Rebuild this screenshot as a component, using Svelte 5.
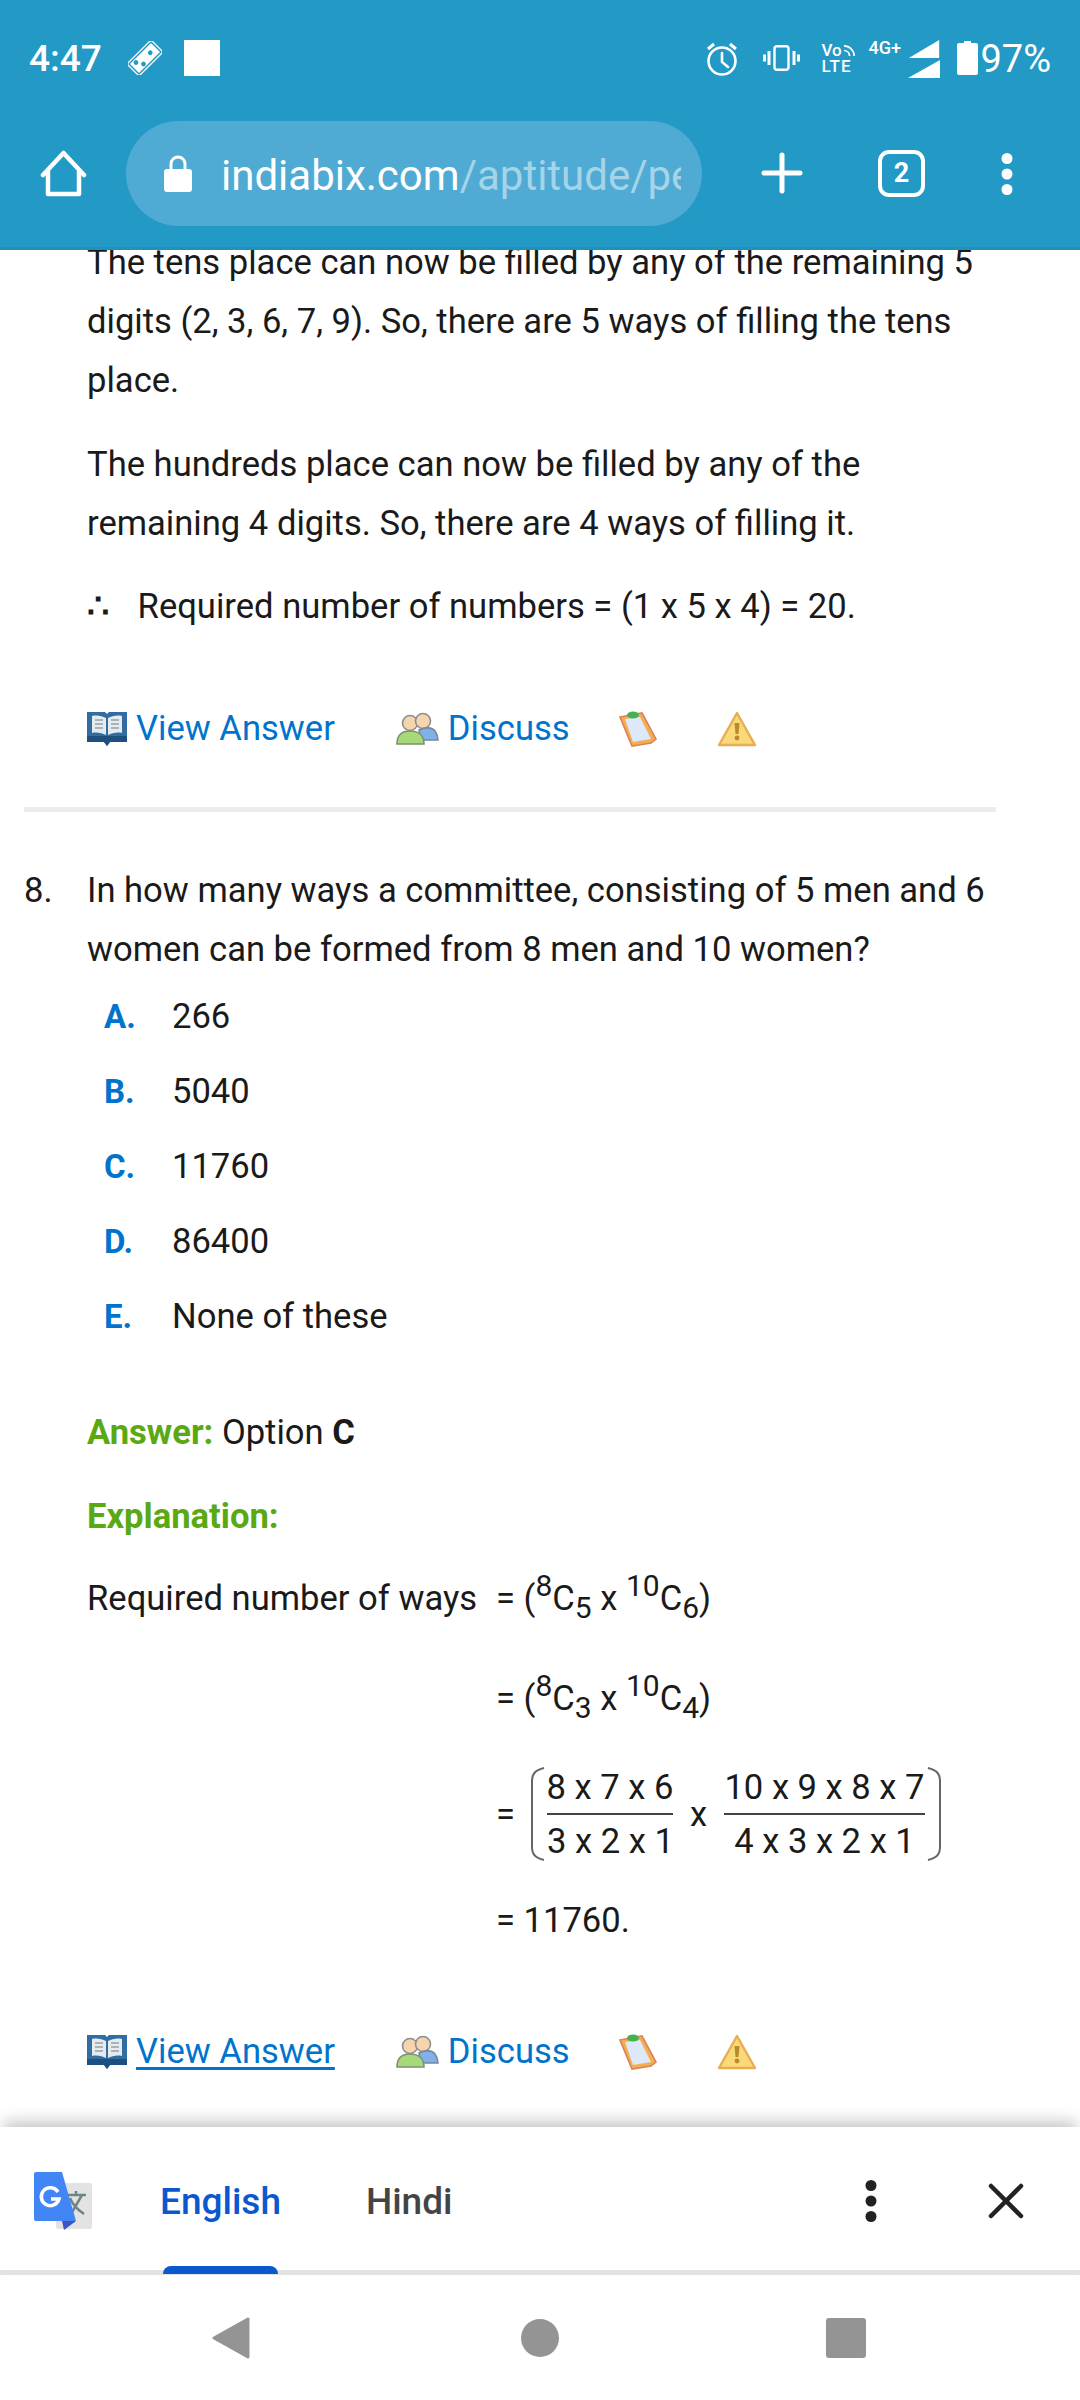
<script lang="ts">
  const options = [
    { key: 'A.', value: '266' },
    { key: 'B.', value: '5040' },
    { key: 'C.', value: '11760' },
    { key: 'D.', value: '86400' },
    { key: 'E.', value: 'None of these' },
  ];
</script>

{#snippet actions(underlined)}
  <div class="actions">
    <svg class="ico book" viewBox="0 0 40 36">
      <path d="M0 1h18l2 2 2-2h18v30H23l-3 4-3-4H0z" fill="#2f6da3" />
      <path d="M0 25h40v6H23l-3 4-3-4H0z" fill="#1d4f7f" />
      <path d="M5 5c5-1 10 0 14 2v17c-4-2-9-3-14-2zM35 5c-5-1-10 0-14 2v17c4-2 9-3 14-2z" fill="#e6ebee" />
      <path d="M8 9h8M8 13h8M8 17h8M24 9h8M24 13h8M24 17h8" stroke="#aab3b9" stroke-width="2" />
    </svg>
    <a class="link" class:underlined href="#answer">View Answer</a>
    <svg class="ico people" viewBox="0 0 44 34">
      <circle cx="15" cy="11" r="7.5" fill="#f6d5ae" stroke="#8b8f92" stroke-width="1.6" />
      <circle cx="28" cy="9" r="7.5" fill="#f6d5ae" stroke="#8b8f92" stroke-width="1.6" />
      <path d="M24 18c6-3 13-3 16 1 2 3 3 6 3 9H26z" fill="#7fb2ea" stroke="#7c8794" stroke-width="1.6" />
      <path d="M2 32c0-8 4-13 13-13s14 5 14 13z" fill="#a6d97a" stroke="#7f8f76" stroke-width="1.6" />
    </svg>
    <a class="link" href="#discuss">Discuss</a>
    <svg class="ico clip" viewBox="0 0 38 36">
      <path d="M1 6l22-4 14 26-5 4-19 3z" fill="#f0b050" stroke="#e0805a" stroke-width="1.6" />
      <path d="M6 8l15-2 11 22-18 3z" fill="#dde8fb" />
      <ellipse cx="14" cy="4" rx="6" ry="3.5" fill="#43b24e" />
    </svg>
    <svg class="ico warn" viewBox="0 0 40 36">
      <path d="M20 2L38 34H2z" fill="#f9d978" stroke="#e9ad52" stroke-width="2.4" stroke-linejoin="round" />
      <path d="M17.500 12h5l-1 11h-3z" fill="#b98a2e" />
      <circle cx="20" cy="27" r="2.400" fill="#b98a2e" />
    </svg>
  </div>
{/snippet}

<div class="screen">
  <header class="top">
    <div class="status">
      <span class="time">4:47</span>
      <svg class="domino" viewBox="0 0 32 32">
        <g transform="rotate(-45 16 16)">
          <rect x="0" y="8" width="32" height="16" rx="2" fill="none" stroke="#fff" stroke-width="1.2" />
          <rect x="2" y="10" width="28" height="12" fill="#fff" />
          <circle cx="7" cy="13" r="2.2" fill="#2399c6" />
          <circle cx="11" cy="19" r="2.2" fill="#2399c6" />
          <circle cx="23" cy="16" r="2.2" fill="#2399c6" />
        </g>
      </svg>
      <span class="square"></span>
      <span class="spacer"></span>
      <svg class="alarm" viewBox="0 0 32 34" fill="none" stroke="#fff" stroke-width="2.6">
        <circle cx="16" cy="19" r="13.5" />
        <path d="M16 11v9l6 5" stroke-linecap="round" />
        <path d="M2 7l6-5M30 7l-6-5" stroke-width="3" />
      </svg>
      <svg class="vibrate" viewBox="0 0 37 26" fill="none" stroke="#fff">
        <rect x="11.5" y="1.2" width="14" height="23.6" rx="2.5" stroke-width="2.4" />
        <path d="M6 6v14M31 6v14" stroke-width="3" />
        <path d="M1.5 9.500v7M35.500 9.500v7" stroke-width="3" />
      </svg>
      <span class="volte">
        <span class="vo">Vo<svg viewBox="0 0 14 14" fill="none" stroke="#fff" stroke-width="1.8"><path d="M1 2c6 0 11 5 11 11M1 7c3.500 0 6 2.500 6 6" /></svg></span>
        <span class="lte">LTE</span>
      </span>
      <span class="net">4G+</span>
      <span class="signal">
        <svg viewBox="0 0 32 19"><path d="M0 19L32 0v19z" fill="#fff" /></svg>
        <svg viewBox="0 0 32 18"><path d="M0 18L32 0v18z" fill="#fff" /></svg>
      </span>
      <svg class="battery" viewBox="0 0 21 34"><path d="M7 0h7v2h5a2 2 0 0 1 2 2v28a2 2 0 0 1-2 2H2a2 2 0 0 1-2-2V4a2 2 0 0 1 2-2h5z" fill="#fff" /></svg>
      <span class="pct">97%</span>
    </div>
    <div class="toolbar">
      <svg class="home" viewBox="0 0 47 47" fill="none" stroke="#fff" stroke-width="4.500" stroke-linejoin="round" stroke-linecap="round">
        <path d="M3 25L23.500 3 44 25M8 21v23h31V21" />
      </svg>
      <div class="url">
        <svg class="lock" viewBox="0 0 28 37">
          <path d="M7 15V9a7 7 0 0 1 14 0v6" fill="none" stroke="#fff" stroke-width="3" />
          <rect x="0" y="14" width="28" height="23" rx="3" fill="#fff" />
        </svg>
        <span class="addr">indiabix.com<span class="path">/aptitude/permutations-and-combinations</span></span>
      </div>
      <svg class="plus" viewBox="0 0 42 42" stroke="#fff" stroke-width="5" stroke-linecap="round"><path d="M21 3v36M3 21h36" /></svg>
      <span class="tabs">2</span>
      <svg class="dots" viewBox="0 0 12 42" fill="#fff"><circle cx="6" cy="5.500" r="5.500" /><circle cx="6" cy="21" r="5.500" /><circle cx="6" cy="36.500" r="5.500" /></svg>
    </div>
  </header>

  <main class="content">
    <div class="explain-top">
      <p>The tens place can now be filled by any of the remaining 5 digits (2, 3, 6, 7, 9). So, there are 5 ways of filling the tens place.</p>
      <p>The hundreds place can now be filled by any of the remaining 4 digits. So, there are 4 ways of filling it.</p>
      <p><span class="therefore">∴</span> Required number of numbers = (1 x 5 x 4) = 20.</p>
    </div>
    {@render actions(false)}
    <hr />

    <section class="question">
      <span class="num">8.</span>
      <p>In how many ways a committee, consisting of 5 men and 6 women can be formed from 8 men and 10 women?</p>
    </section>

    <ul class="options">
      {#each options as o}
        <li><b>{o.key}</b><span>{o.value}</span></li>
      {/each}
    </ul>

    <p class="answer"><b>Answer:</b> Option <strong>C</strong></p>
    <p class="expl-title">Explanation:</p>

    <div class="math">
      <div class="m-row r1"><span class="m-label">Required number of ways</span><span class="m-val">= (<sup>8</sup>C<sub>5</sub> x <sup>10</sup>C<sub>6</sub>)</span></div>
      <div class="m-row r2"><span class="m-label"></span><span class="m-val">= (<sup>8</sup>C<sub>3</sub> x <sup>10</sup>C<sub>4</sub>)</span></div>
      <div class="m-row r3">
        <span class="m-label"></span>
        <div class="m-val frac-row">
          <span>=</span>
          <svg class="paren" viewBox="0 0 18 94" fill="none" stroke="#666" stroke-width="2"><path d="M15 1C7 3 3 6 3 14v66c0 8 4 11 12 13" /></svg>
          <div class="frac f1"><span>8 x 7 x 6</span><span class="den">3 x 2 x 1</span></div>
          <span class="times">x</span>
          <div class="frac f2"><span>10 x 9 x 8 x 7</span><span class="den">4 x 3 x 2 x 1</span></div>
          <svg class="paren" viewBox="0 0 18 94" fill="none" stroke="#666" stroke-width="2"><path d="M3 1c8 2 12 5 12 13v66c0 8-4 11-12 13" /></svg>
        </div>
      </div>
      <div class="m-row r4"><span class="m-label"></span><span class="m-val">= 11760.</span></div>
    </div>

    {@render actions(true)}
  </main>

  <div class="translate">
    <svg class="gt" viewBox="0 0 58 58">
      <rect x="22" y="11" width="36" height="46" rx="2" fill="#e3e3e3" />
      <path d="M33 23h19M42 19v4M37 42l11-19M36 26c3 8 8 12 14 16" fill="none" stroke="#6f8587" stroke-width="2.500" />
      <path d="M2 0h26l14 49H2a2 2 0 0 1-2-2V2a2 2 0 0 1 2-2z" fill="#4285f4" />
      <path d="M28 49h14L30 58z" fill="#3f51c5" />
      <path d="M24 20a9 9 0 1 0 1 7h-8" fill="none" stroke="#fff" stroke-width="3.500" />
    </svg>
    <div class="lang active">English<span class="indicator"></span></div>
    <div class="lang">Hindi</div>
    <span class="spacer"></span>
    <svg class="t-dots" viewBox="0 0 12 42" fill="#222"><circle cx="6" cy="5.500" r="5.500" /><circle cx="6" cy="21" r="5.500" /><circle cx="6" cy="36.500" r="5.500" /></svg>
    <svg class="t-close" viewBox="0 0 36 36" stroke="#222" stroke-width="4.500" stroke-linecap="round"><path d="M3 3l30 30M33 3L3 33" /></svg>
  </div>

  <nav class="nav">
    <svg class="back" viewBox="0 0 38 42"><path d="M36 2v38L2 21z" fill="#949494" stroke="#949494" stroke-width="3" stroke-linejoin="round" /></svg>
    <span class="circle"></span>
    <span class="stop"></span>
  </nav>
</div>

<style>
  :global(body) {
    background: #fff;
  }

  .screen {
    width: 1080px;
    height: 2400px;
    display: flex;
    flex-direction: column;
    overflow: hidden;
    font-family: Roboto, sans-serif;
    font-size: 34.6px;
    color: #1a1a1a;
  }

  .top {
    height: 250px;
    flex: none;
    background: #2399c6;
    border-bottom: 3px solid #2190bb;
    box-sizing: border-box;
    position: relative;
    z-index: 2;
    color: #fff;
  }

  .status {
    height: 121px;
    display: flex;
    align-items: flex-start;
    padding: 40px 29px 0 29px;
    box-sizing: border-box;
  }

  .time {
    font-size: 37px;
    font-weight: 500;
    line-height: 38px;
    width: 99px;
  }

  .domino {
    width: 34px;
    height: 34px;
    margin-top: 1px;
  }

  .square {
    width: 36px;
    height: 36px;
    background: #fff;
    margin-left: 22px;
  }

  .spacer {
    flex: 1;
  }

  .alarm {
    width: 32px;
    height: 34px;
    margin-top: 2px;
  }

  .vibrate {
    width: 37px;
    height: 26px;
    margin: 5px 0 0 25px;
  }

  .volte {
    width: 37px;
    margin: 2px 0 0 21px;
    display: flex;
    flex-direction: column;
    font-size: 17px;
    font-weight: 500;
    line-height: 16px;
  }

  .vo {
    display: flex;
    align-items: center;
  }

  .vo svg {
    width: 13px;
    height: 13px;
    margin-left: 1px;
  }

  .lte {
    letter-spacing: 1px;
  }

  .net {
    font-size: 18px;
    font-weight: 500;
    line-height: 16px;
    width: 38px;
    margin-left: 10px;
  }

  .signal {
    display: flex;
    flex-direction: column;
    gap: 2px;
    width: 32px;
    margin-left: 2px;
  }

  .signal svg {
    display: block;
    width: 32px;
    height: 18px;
  }

  .battery {
    width: 21px;
    height: 34px;
    margin: 1px 0 0 17px;
  }

  .pct {
    font-size: 38px;
    line-height: 38px;
    margin-left: 2px;
  }

  .toolbar {
    display: flex;
    align-items: flex-start;
    padding-left: 40px;
  }

  .home {
    width: 47px;
    height: 47px;
    margin-top: 29px;
  }

  .url {
    width: 576px;
    height: 105px;
    margin-left: 39px;
    border-radius: 53px;
    background: #4fabd3;
    display: flex;
    align-items: center;
    padding: 0 21px 0 38px;
    box-sizing: border-box;
    overflow: hidden;
  }

  .lock {
    width: 28px;
    height: 37px;
    flex: none;
    margin-top: -1px;
  }

  .addr {
    margin-left: 29px;
    font-size: 42px;
    white-space: nowrap;
    overflow: hidden;
    color: #fff;
    padding-top: 3px;
  }

  .path {
    color: #a5d4e9;
  }

  .plus {
    width: 42px;
    height: 42px;
    margin: 31px 0 0 59px;
  }

  .tabs {
    width: 47px;
    height: 47px;
    margin: 29px 0 0 75px;
    box-sizing: border-box;
    border: 4px solid #fff;
    border-radius: 11px;
    font-size: 27px;
    font-weight: 700;
    line-height: 39px;
    text-align: center;
  }

  .dots {
    width: 12px;
    height: 42px;
    margin: 32px 0 0 76px;
  }

  .content {
    flex: 1;
    min-height: 0;
    overflow: hidden;
    padding: 0 24px 0 87px;
    line-height: 59px;
  }

  p {
    margin: 0;
  }

  .explain-top {
    margin-top: -17px;
    width: 900px;
  }

  .explain-top p + p {
    margin-top: 25px;
  }

  .explain-top p:last-child {
    margin-top: 24px;
  }

  .therefore {
    display: inline-block;
    width: 42px;
    font-weight: 700;
  }

  .actions {
    display: flex;
    align-items: center;
    height: 59px;
    margin-top: 63px;
  }

  .ico {
    flex: none;
    filter: blur(0.5px);
  }

  .book {
    width: 40px;
    height: 36px;
    margin-right: 9px;
  }

  .people {
    width: 44px;
    height: 34px;
    margin: 0 9px 0 60px;
  }

  .clip {
    width: 38px;
    height: 36px;
    margin-left: 49px;
  }

  .warn {
    width: 40px;
    height: 36px;
    margin-left: 60px;
  }

  .link {
    color: #0074cc;
    text-decoration: none;
  }

  .link.underlined {
    text-decoration: underline;
    text-underline-offset: 4px;
  }

  hr {
    width: 972px;
    height: 5px;
    border: 0;
    background: #ececec;
    margin: 49px 0 0 -63px;
  }

  .question {
    margin: 49px 0 0 -63px;
    display: flex;
  }

  .num {
    width: 63px;
    flex: none;
  }

  .question p {
    width: 930px;
  }

  .options {
    list-style: none;
    margin: 0 0 0 17px;
    padding: 0;
  }

  .options li {
    height: 75px;
    display: flex;
    align-items: center;
  }

  .options b {
    width: 68px;
    color: #0074cc;
    font-weight: 700;
    font-size: 33px;
  }

  .answer {
    margin-top: 49px;
  }

  .answer b,
  .expl-title {
    color: #5aa912;
    font-weight: 700;
  }

  .answer strong {
    font-weight: 700;
  }

  .expl-title {
    margin-top: 25px;
  }

  .math {
    margin: 23px 0 72px;
  }

  .m-row {
    display: flex;
    align-items: center;
  }

  .m-label {
    width: 409px;
    flex: none;
  }

  .r1 {
    height: 59px;
  }

  .r2 {
    height: 59px;
    margin-top: 41px;
  }

  .r3 {
    height: 94px;
    margin-top: 39px;
  }

  .r4 {
    height: 59px;
    margin-top: 30px;
  }

  sup,
  sub {
    font-size: 30px;
    line-height: 0;
  }

  sup {
    vertical-align: 14px;
  }

  sub {
    vertical-align: -8px;
  }

  .frac-row {
    display: flex;
    align-items: center;
    line-height: 52px;
    white-space: nowrap;
  }

  .paren {
    width: 18px;
    height: 94px;
    flex: none;
  }

  .frac-row .paren:first-of-type {
    margin-left: 14px;
  }

  .frac {
    display: flex;
    flex-direction: column;
    align-items: center;
    flex: none;
  }

  .f1 {
    width: 126px;
  }

  .f2 {
    width: 201px;
  }

  .den {
    border-top: 2px solid #444;
    width: 100%;
    text-align: center;
  }

  .times {
    width: 51px;
    text-align: center;
  }

  .translate {
    height: 148px;
    flex: none;
    background: #fff;
    box-shadow: 0 -10px 14px -4px rgba(0, 0, 0, 0.22);
    display: flex;
    align-items: flex-start;
    padding: 0 56px 0 34px;
    box-sizing: border-box;
    position: relative;
    border-bottom: 5px solid #e0e3e0;
  }

  .gt {
    width: 58px;
    height: 58px;
    margin-top: 45px;
  }

  .lang {
    font-size: 37px;
    font-weight: 500;
    color: #444;
    line-height: 44px;
    margin-top: 53px;
  }

  .lang.active {
    color: #0b57d0;
    margin-left: 68px;
    margin-right: 85px;
    position: relative;
  }

  .indicator {
    position: absolute;
    left: 3px;
    right: 3px;
    top: 86px;
    height: 8px;
    background: #0b57d0;
    border-radius: 8px 8px 0 0;
  }

  .t-dots {
    width: 12px;
    height: 42px;
    margin: 53px 111px 0 0;
  }

  .t-close {
    width: 36px;
    height: 36px;
    margin-top: 56px;
  }

  .nav {
    height: 125px;
    flex: none;
    display: flex;
    align-items: center;
    padding-left: 212px;
    background: #fff;
  }

  .back {
    width: 38px;
    height: 42px;
  }

  .circle {
    width: 38px;
    height: 38px;
    border-radius: 50%;
    background: #949494;
    margin-left: 271px;
  }

  .stop {
    width: 40px;
    height: 40px;
    border-radius: 3px;
    background: #949494;
    margin-left: 267px;
  }
</style>
